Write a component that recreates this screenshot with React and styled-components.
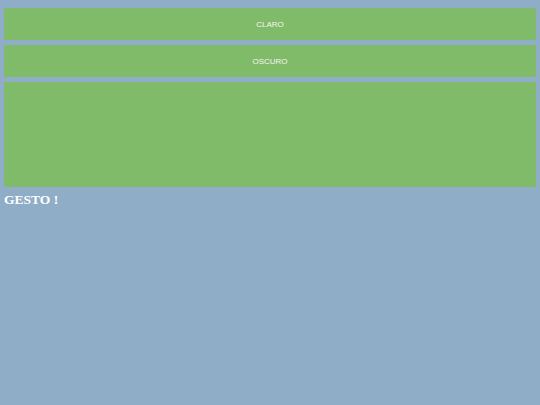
import React from "react";
import styled, { createGlobalStyle } from "styled-components";

const GlobalStyle = createGlobalStyle`
  html, body {
    margin: 0;
    padding: 0;
    background-color: #8fadc6;
    height: 100%;
  }
`;

const Page = styled.div`
  display: flex;
  flex-direction: column;
  gap: 5px;
  padding: 8px 4px 0;
`;

const Button = styled.div`
  background-color: #80bb6a;
  height: ${(p) => p.h}px;
  display: flex;
  align-items: center;
  justify-content: center;
  color: #f3f7ef;
  font-family: "Liberation Sans", Arial, sans-serif;
  font-size: 8px;
`;

const Title = styled.div`
  color: #ffffff;
  font-family: "Liberation Serif", "Times New Roman", serif;
  font-weight: bold;
  font-size: 13.5px;
  margin-top: 0;
`;

const App = () => {
  return (
    <>
      <GlobalStyle />
      <Page>
        <Button h={32}>CLARO</Button>
        <Button h={32}>OSCURO</Button>
        <Button h={105} />
        <Title>GESTO !</Title>
      </Page>
    </>
  );
};

export default App;
